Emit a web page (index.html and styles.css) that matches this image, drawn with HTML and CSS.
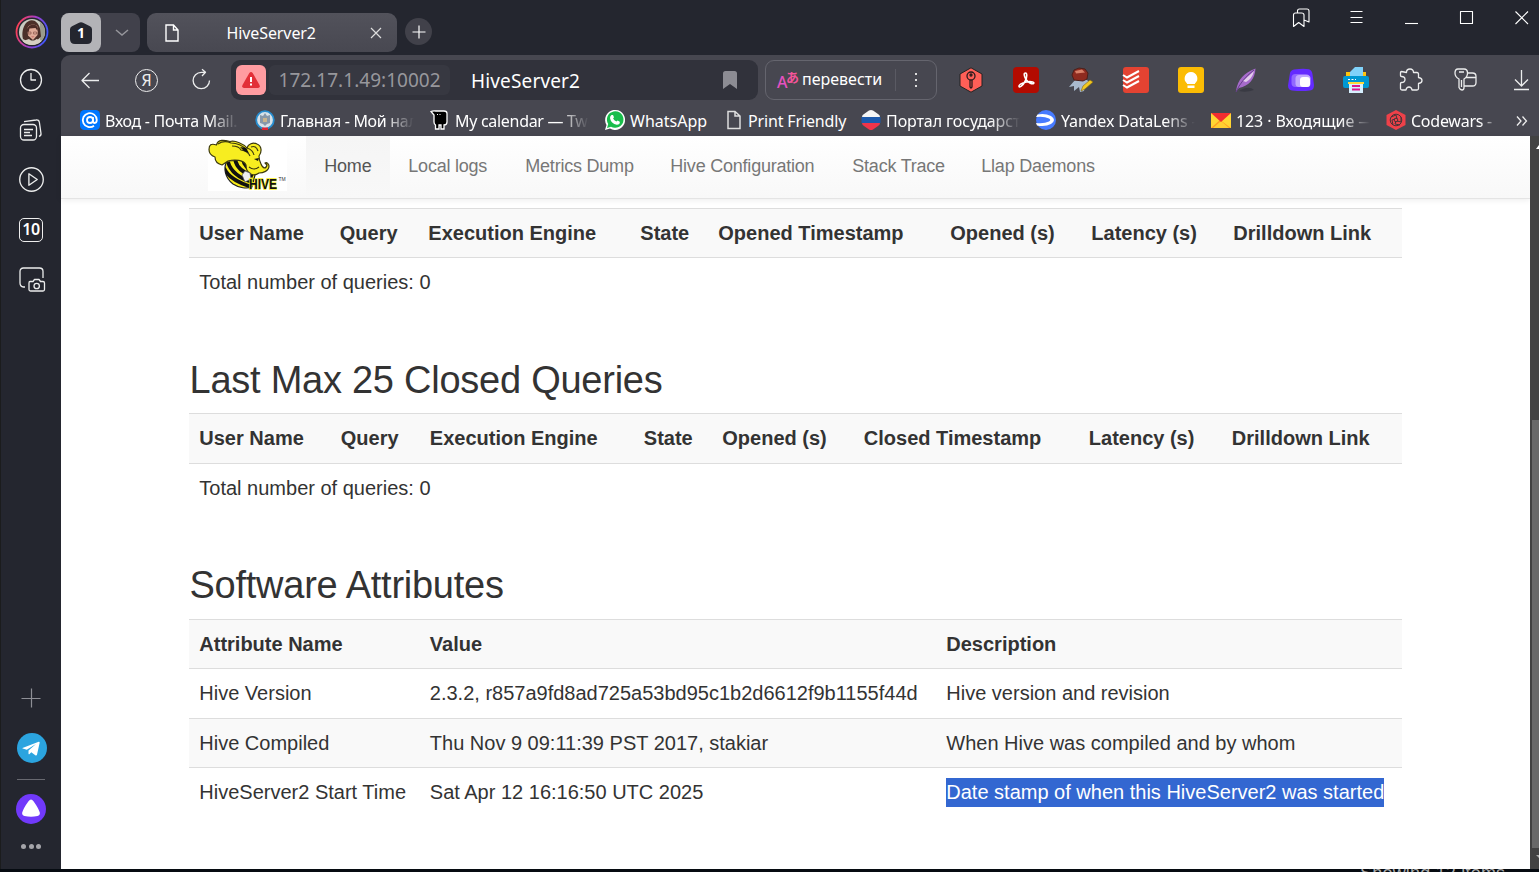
FILE: index.html
```html
<!DOCTYPE html>
<html lang="ru">
<head>
<meta charset="utf-8">
<title>HiveServer2</title>
<link rel="stylesheet" href="styles.css">
</head>
<body>
<div class="window">
<aside class="sidebar">
  <svg class="s-avatar" viewBox="0 0 34 34"><defs><linearGradient id="ring" x1="0" x2="1" y1=".3" y2=".6"><stop stop-color="#ff4050"/><stop offset=".5" stop-color="#a33cc8"/><stop offset="1" stop-color="#3c58ff"/></linearGradient><clipPath id="face"><circle cx="17" cy="17" r="13"/></clipPath></defs><circle cx="17" cy="17" r="15.5" fill="#24262f" stroke="url(#ring)" stroke-width="1.8"/><g clip-path="url(#face)"><path fill="#c9cbc0" d="M0 0h34v34H0z"/><path fill="#9a9b8d" d="M25 3h7v24h-7z"/><path fill="#4b3029" d="M8 24C6 18 9 8 13 6.500c5-3 10 0 12 7l1 8-4 4H11z"/><path fill="#dfab98" d="M12.500 13c1-4 9-5 10.500 0l-.5 7-4.500 5-5-4.500z"/><path fill="#4b2c27" d="M11.500 16c1-7 9-9 11.500-3l-.5 3-2-3-6 .5-1 4z"/><path fill="none" stroke="#8a574c" stroke-width=".7" d="M13 17h3v2h-3zM18.500 17h3v2h-3z"/><path fill="#c05e58" d="M16 21.500h3.500l-1.700 1z"/><path fill="#d6cfc2" d="m8 26 6-2 3.500 3 4-3 6 2v7H8z"/></g></svg>
  <svg class="s-clock line" viewBox="0 0 24 24"><circle cx="12" cy="12" r="10.5"/><path d="M12 5v7h5"/></svg>
  <svg class="s-news line" viewBox="0 0 24 24"><rect x="1.5" y="6.5" width="16" height="15.5" rx="3.5"/><path d="M5 3.700 17 2q3-.5 3.400 2.500l1.600 11q.3 2-2 3M5 11.500h9M5 14.500h6M5 17.500h8"/></svg>
  <svg class="s-play line" viewBox="0 0 24 24"><circle cx="12" cy="12" r="11.3"/><path d="M9.500 6.500v11l8-5.500z"/></svg>
  <div class="s-count">10</div>
  <svg class="s-shot line" viewBox="0 0 26 25"><path d="M6 20H4.500Q1 19.500 1 16V4.500Q1 1 4.500 1h16q3.500 0 3.500 3.500V11"/><path d="M11 14.500h3l1.500-2h4.500l1.500 2H24q1.500 0 1.500 1.500v6.500q0 1.500-1.500 1.500H11.500Q10 24 10 22.500V16q0-1.500 1-1.500z"/><circle cx="17.700" cy="19" r="2.700"/></svg>
  <svg class="s-plus" viewBox="0 0 20 20"><path d="M10.500 .5v19M.5 10.500h19" stroke="#8e8f96" fill="none" stroke-width="1.2"/></svg>
  <svg class="s-tg" viewBox="0 0 30 30"><circle cx="15" cy="15" r="15" fill="#2ba4df"/><path fill="#fff" d="m5.500 15 16.200-6.200q1.200-.2.900 1.300L20 21.700q-.5 1.200-1.700.5l-4-3-2 2q-.8.500-.8-.6v-3l7.500-6.700-9.200 5.800-4-1.200q-.8-.2-.3-.5z"/></svg>
  <div class="s-rule"></div>
  <svg class="s-alice" viewBox="0 0 30 30"><circle cx="15" cy="15" r="15" fill="#7139fb"/><path fill="#fff" d="M12.500 7.200Q15 3.600 17.500 7.200q5 7 6.300 11.400.5 2.600-2.300 3.500-6.500 1.500-13 0-2.800-.9-2.300-3.500Q7.500 14 12.500 7.200z"/></svg>
  <div class="s-dots"><i></i><i></i><i></i></div>
</aside>

<div class="browser">
  <header class="titlebar">
    <div class="group"><span class="group-count"><svg viewBox="0 0 22 22"><path fill="#24262f" d="M8.500 1Q11-.4 13.500 1L20 4.200q2 1 2 3V17q0 5-5 5H5q-5 0-5-5V7.200q0-2 2-3z"/></svg><b>1</b></span><svg class="chev" viewBox="0 0 14 8"><path d="m1 1 6 5 6-5" fill="none" stroke="#96969c" stroke-width="1.500"/></svg></div>
    <div class="tab"><svg class="tab-doc" viewBox="0 0 14 18"><path d="M1 1h7.500L13 6v11H1zM8.500 1v5H13" fill="none" stroke="#fff" stroke-width="1.400"/></svg><span>HiveServer2</span><svg class="tab-x" viewBox="0 0 12 12"><path d="m1 1 10 10M11 1 1 11" stroke="#ddd" stroke-width="1.200"/></svg></div>
    <div class="newtab"><svg viewBox="0 0 14 14"><path d="M7 .5v13M.5 7h13" stroke="#fff" stroke-width="1.200"/></svg></div>
    <div class="winctl">
      <svg viewBox="0 0 20 20"><path class="w" d="M1.500 18.500V7q0-2 2-2h6q2.500 0 2.500 2v11.500l-5.300-4zM5.500 5V3q0-2 2-2H15q2 0 2 2v11l-5-2"/></svg>
      <svg viewBox="0 0 20 20"><path class="w" d="M3.500 3.500h12M3.500 9.500h12M3.500 14.500h12"/></svg>
      <svg viewBox="0 0 20 20"><path class="w" d="M3 15.500h13"/></svg>
      <svg viewBox="0 0 20 20"><path class="w" d="M3.500 3.500h12v12h-12z"/></svg>
      <svg viewBox="0 0 20 20"><path class="w" d="m3.500 3.500 12.500 12.500M16 3.500 3.500 16"/></svg>
    </div>
  </header>

  <div class="toolbar">
    <div class="navs">
      <svg viewBox="0 0 24 24"><path class="w" d="M21 12.500H4m7.500-7.500L4 12.500l7.500 7.500"/></svg>
      <span class="ya">Я</span>
      <svg viewBox="0 0 24 24"><path class="w" d="M20.500 12.500a8.200 8.200 0 1 1-8.200-8.200h4.200M13 1.300 16.500 4.300 13 8"/></svg>
    </div>
    <div class="omnibox"><span class="warn"><svg viewBox="0 0 18 16"><path fill="#e22f38" d="M7.300 1q1.700-2 3.400 0L17.500 13q1 2.700-1.500 3H2Q-.5 15.700.5 13z"/><path stroke="#fff" stroke-width="2" d="M9 5v5M9 11.500v2"/></svg></span><span class="host">172.17.1.49:10002</span><span class="ptitle">HiveServer2</span><svg class="bm" viewBox="0 0 14 18"><path fill="#8c8c93" d="M2.500 0h9Q14 0 14 2.500V18l-7-5-7 5V2.500Q0 0 2.500 0z"/></svg></div>
    <div class="translate"><span class="tr-ico"><b>A</b><i>あ</i></span><span class="tr-text">перевести</span><span class="tr-more"><i></i><i></i><i></i></span></div>
    <div class="exts">
      <svg viewBox="0 0 26 26"><path fill="#ff5f57" stroke="#222" d="m13 .8 11 6.200v12l-11 6.200L2 19V7z"/><g fill="none" stroke="#2b1a1c" stroke-width="1.300"><circle cx="13" cy="9" r="4"/><circle cx="13" cy="8" r="1"/><path d="M12 13v7l1 1 1-1v-7"/></g></svg>
      <svg viewBox="0 0 26 26"><rect width="26" height="26" rx="4" fill="#b30b00"/><path fill="none" stroke="#fff" stroke-width="1.600" d="M12.500 6c-2 0-1.500 3 .5 6.500 2 3 6 5 7.500 4s-1.500-2.500-7-1.500-8 3.200-7.500 4.500 3.500-.5 6-5 2-8.500.5-8.500z"/></svg>
      <svg viewBox="0 0 26 26"><path fill="#a9bace" d="m7 13-6 7 5-1 0 5 5-4 1 5 4-1 1-6 5-3-5-3z"/><path fill="#8e2b1f" stroke="#4b201a" d="m6 3 5-2 6 1 3 4-1 6-4 2-9-1-2-5z"/><path fill="#d98068" d="m7 4 7-1.500 3 3-9 1z"/><path fill="#f3c81f" stroke="#836812" stroke-width=".6" d="m13 24 2-5 7-6 3 2-8 7z"/></svg>
      <svg viewBox="0 0 26 26"><rect width="26" height="26" rx="3" fill="#e44332"/><path fill="none" stroke="#fff" stroke-width="2" d="m0 8 4 2.500L16 4M0 13l4 2.500L16 9M0 18l4 2.500L16 14"/></svg>
      <svg viewBox="0 0 26 26"><rect width="26" height="26" rx="3" fill="#fbbc04"/><path fill="#fff" d="M13 5a6.500 6.500 0 0 1 4 11.500V17H9v-.5A6.500 6.500 0 0 1 13 5zM9.500 18.500h7V21h-7z"/></svg>
      <svg viewBox="0 0 26 26"><path fill="#393a43" d="M6 24q10-6 15-1-8 3-15 1z"/><path fill="#a66bcb" d="M3 24C5 12 11 6 22.500 1.500 22 12 16 19 6 21z"/><path fill="#e3cdec" d="M10 14 21 4q-2 8-8 11z"/><path fill="none" stroke="#68408c" d="M3 25Q8 13 21 3"/></svg>
      <svg viewBox="0 0 26 26"><path fill="#642bff" d="M6 2.500Q16 1 21 2.300q3 1 3.500 5L26 18q.2 5-4 5.500-8 1-18 0-4-.7-4-5L2 6q.7-3 4-3.500z"/><rect x="3.500" y="7" width="18" height="13" rx="4" fill="#9268ff"/><rect x="7.500" y="8" width="15" height="12" rx="3.500" fill="#c1a8ff"/><rect x="12" y="10" width="10" height="10" rx="3" fill="#fff"/></svg>
      <svg viewBox="0 0 26 26"><path fill="#ffc40c" d="M3 5h20v8H3z"/><path fill="#80d2fa" d="M7 10V5l5-5h8v10z"/><rect y="9" width="26" height="12" rx="2" fill="#0098d2"/><path fill="#ffd83a" d="M5 15h16v2H5z"/><path fill="#d7f0ff" d="M6 17h14v9H6z"/><path stroke="#dd168c" stroke-width="2" d="M9 19h8M9 22.500h8"/><path stroke="#fff" stroke-dasharray="2 1.500" d="M5 12.500h8"/></svg>
      <svg viewBox="0 0 26 26"><path class="w" d="M3.500 4.500q-1 0-1 1v3q0 1 1 1 3.500 0 3.500 3t-3.500 3q-1 0-1 1v5q0 1.500 1.500 1.500h4q.5-3 3-3t3 3h5q1.500 0 1.500-1.500v-5q3.500-.5 3.500-3t-3.500-3v-3.500q0-1.500-1.500-1.500h-3.500q0-3.500-3.500-3.500t-3.500 3.500z"/></svg>
      <svg viewBox="0 0 26 26"><path class="w" d="M5 2h6q3.500 0 3.500 4T11 12v8.500q0 2.500-2 2.500t-3-2.500V12q-4-2-4-6t3-4zM6 5h5M14.500 6h5q3.500 0 3.500 3.500v6q0 3.500-3.500 3.500H11M12.500 10.500H23M8.500 13v7"/></svg>
      <svg viewBox="0 0 26 26"><path class="w" d="M13.500 3v16M7 12.500l6.500 6.500 6.500-6.500M6 22.500h15"/></svg>
    </div>
  </div>

  <nav class="bookmarks">
    <a><svg viewBox="0 0 20 20"><rect width="20" height="20" rx="4.500" fill="#07f"/><g fill="none" stroke="#fff" stroke-width="1.800"><circle cx="10" cy="10" r="3"/><path d="M13 7v4q0 2 1.800 2t2-3A7 7 0 1 0 14 15.700"/></g></svg><span class="fade f1">Вход - Почта Mail.</span></a>
    <a><svg viewBox="0 0 20 20"><circle cx="10" cy="10" r="8.800" fill="#d7e2e9" stroke="#278dcf" stroke-width="1.800"/><path fill="#8798a9" d="m10 3 2 3 3-1v8l-3 1-2 2-2-2-3-1V5l3 1z"/><path fill="#c9b48d" d="M8 8h4v4H8z"/><path fill="#e02634" d="M7 17.500h6V20H7z"/></svg><span class="fade f2">Главная - Мой нал</span></a>
    <a><svg viewBox="0 0 20 20"><path fill="#000" stroke="#fff" stroke-width="1.300" d="M1 1.500q2-1 5-.5h8q3 0 3 2.500V12q0 3-3 3v4h-3v-4H9v4H5.500v-4Q4 14 4 12V5z"/><path fill="#fff" d="M7 4h1v1H7zM9.500 4h1v1h-1z"/></svg><span class="fade f3">My calendar — Twe</span></a>
    <a><svg viewBox="0 0 20 20"><path fill="#fff" d="M0 20 1.500 15A10 10 0 1 1 5 18.500z"/><path fill="#19bd4b" d="M2 18 3.200 14a8.300 8.300 0 1 1 2.800 2.700z"/><path fill="#fff" d="m6.500 5 1.500.1 1 2.200-.9 1.200q1 2.200 3.300 3l1.200-1 2.200 1.200q.4 3-3 3Q6 13.700 5 8q0-2 1.500-3z"/></svg><span>WhatsApp</span></a>
    <a><svg viewBox="0 0 20 20"><path d="M4 1.500h7L16 6v12.500H4zM11 1.500V6h5" fill="none" stroke="#ddd" stroke-width="1.500"/></svg><span class="f5">Print Friendly</span></a>
    <a><svg viewBox="0 0 20 20"><path fill="#f5f5f5" d="M1 7q0-2 2-3l5-3.500q2-1 4 0L17 4q2 1 2 3z"/><path fill="#1d5aac" d="M.5 7h19v6H.5z"/><path fill="#ef354a" d="M1 13h18q0 2-2 3l-5 3.500q-2 1-4 0L3 16q-2-1-2-3z"/></svg><span class="fade">Портал государст</span></a>
    <a><svg viewBox="0 0 20 20"><circle cx="10" cy="10" r="10" fill="#477bff"/><path fill="#fff" d="M1.500 4.500Q9 3 15 6q6 4 0 8-5.500 3-14 1.500L0 13q8 1 13-1.500 2.500-1.500 0-3Q8 6 0 7z"/></svg><span class="fade f7">Yandex DataLens -</span></a>
    <a><svg viewBox="0 0 20 20"><path fill="#ffd633" d="M0 3h20v15H0z"/><path fill="#ff9d22" d="m0 18 9-8 11 8z"/><path fill="#ffcf31" d="m2 18 8-7 8 7z"/><path fill="#f22d30" d="M0 3h20l-10 9z"/></svg><span class="fade">123 · Входящие —</span></a>
    <a><svg viewBox="0 0 20 20"><path fill="#ee4149" d="m10 0 9.500 5v10L10 20 .5 15V5z"/><g fill="none" stroke="#473438" stroke-width="1"><circle cx="10" cy="10" r="5.800"/><circle cx="10" cy="10" r="1.800"/><path d="m5 7 5-2 1 4M15 7v5l-4-1M7 15l-1-5 3-1M14 15l-5-1 1-3"/></g></svg><span class="fade f9">Codewars -</span></a>
    <svg class="more" viewBox="0 0 12 12"><path d="m1 1.500 4 4.500-4 4.500M6.500 1.500l4 4.500-4 4.500" fill="none" stroke="#eee" stroke-width="1.300"/></svg>
  </nav>

  <div class="viewport">
    <main class="page">
      <div class="navbar">
        <svg class="hive" viewBox="0 0 79 56"><path fill="#fff" d="M0 0h79v55H0z"/>
          <defs><clipPath id="bee"><path d="M19 25C15 32 17 42 25 48c6 4 14 5 19 3l3-12-9-15z"/></clipPath></defs>
          <path fill="#f7eb18" stroke="#222" stroke-width="1.200" d="M19 25C15 32 17 42 25 48c6 4 14 5 19 3l3-12-9-15z"/>
          <path clip-path="url(#bee)" fill="none" stroke="#111" stroke-width="3.800" d="M16 32q5 12 28 19M20 26q4 14 24 20M27 23q2 12 18 17M35 22q0 9 12 14"/>
          <path fill="#f7ed20" stroke="#3c390e" stroke-width="1.200" stroke-linejoin="round" d="M1 13.500C1 9 3 7 8.500 9 10 3 16 4 22 5.500 27 4 36 8 39 12c1-4 6-6 10-4 5 2 5 8 2 12 0 3 1 6 2 8 2 5 5 5 6 1l-2-2c2-1 4 1 4 3 0 5-6 7-10 7-3 2-7 3-9 0-3-1-4-5-4-8-2-5-11-6-18-4l-6 4c-4-1-7-4-7-8-3-1-6-3-6-7.500z"/>
          <path fill="none" stroke="#3c390e" stroke-width="1.200" d="M10 8q6-4 13-1 9 0 16 7M24 10q7 0 9 4 7 1 9 6M39 12q6 2 7 7M43 11q5-2 7 4M41 31q5 4 10 0"/>
          <path fill="#111" d="m32 11 6 1 3 5-5-2zM46 23l5-1-1 3z"/>
          <path fill="#eee" stroke="#555" stroke-width=".7" d="m34 39 3-4 5 2 1 6-6 3z"/>
          <text x="41" y="53" class="hive-text" textLength="28" lengthAdjust="spacingAndGlyphs">HIVE</text><text x="70.500" y="45" class="tm">TM</text></svg>
        <div class="menu"><a class="active">Home</a><a class="m2">Local logs</a><a class="m3">Metrics Dump</a><a class="m4">Hive Configuration</a><a class="m5">Stack Trace</a><a class="m6">Llap Daemons</a></div>
      </div>
      <section class="content">
        <div class="row head open"><b>User Name</b><b>Query</b><b>Execution Engine</b><b>State</b><b>Opened Timestamp</b><b>Opened (s)</b><b>Latency (s)</b><b>Drilldown Link</b></div>
        <div class="row"><span>Total number of queries: 0</span></div>
        <h2>Last Max 25 Closed Queries</h2>
        <div class="row head closed"><b>User Name</b><b>Query</b><b>Execution Engine</b><b>State</b><b>Opened (s)</b><b>Closed Timestamp</b><b>Latency (s)</b><b>Drilldown Link</b></div>
        <div class="row"><span>Total number of queries: 0</span></div>
        <h2>Software Attributes</h2>
        <div class="row head attrs"><b>Attribute Name</b><b>Value</b><b>Description</b></div>
        <div class="row attrs"><span>Hive Version</span><span>2.3.2, r857a9fd8ad725a53bd95c1b2d6612f9b1155f44d</span><span>Hive version and revision</span></div>
        <div class="row attrs odd"><span>Hive Compiled</span><span>Thu Nov 9 09:11:39 PST 2017, stakiar</span><span>When Hive was compiled and by whom</span></div>
        <div class="row attrs"><span>HiveServer2 Start Time</span><span>Sat Apr 12 16:16:50 UTC 2025</span><span><mark>Date stamp of when this HiveServer2 was started</mark></span></div>
      </section>
    </main>
    <div class="scrollbar"><i class="up"></i><div class="thumb"></div><i class="down"></i></div>
  </div>
</div>
</div>
<footer class="behind"><span>Showing 12 items</span></footer>
</body>
</html>
```

FILE: styles.css
```css
* { box-sizing: border-box; }
body { margin: 0; width: 1539px; height: 872px; overflow: hidden; background: #060b11; font-family: "Noto Sans", sans-serif; }
svg { display: block; flex: none; overflow: visible; }
.window { display: flex; height: 869px; background: #24262f; }
.line, .w { fill: none; stroke: #eceded; stroke-width: 1.3; stroke-linejoin: round; }

.sidebar { width: 61px; flex: none; border-left: 1px solid #1b1c1d; display: flex; flex-direction: column; align-items: center; }
.s-avatar { width: 34px; height: 34px; margin: 15px 0 0 1px; }
.s-clock { width: 24px; height: 24px; margin-top: 19px; }
.s-news { width: 24px; height: 24px; margin-top: 26px; }
.s-play { width: 25px; height: 25px; margin-top: 25px; }
.s-count { width: 24px; height: 24px; margin-top: 26px; border: 1.5px solid #eee; border-radius: 5px; color: #fff; font-weight: 600; font-size: 16px; letter-spacing: -0.3px; line-height: 21px; text-align: center; }
.s-shot { width: 26px; height: 25px; margin: 25px 0 0 2px; }
.s-plus { width: 20px; height: 20px; margin-top: 396px; }
.s-tg { width: 30px; height: 30px; margin: 25px 0 0 2px; }
.s-rule { width: 28px; height: 1px; background: #686970; margin-top: 16px; }
.s-alice { width: 30px; height: 30px; margin-top: 14px; }
.s-dots { display: flex; gap: 2.5px; margin-top: 20px; }
.s-dots i { width: 5px; height: 5px; border-radius: 50%; background: #a5a5aa; }

.browser { width: 1478px; display: flex; flex-direction: column; }
.titlebar { height: 55px; display: flex; align-items: flex-start; padding-top: 13px; }
.group { width: 79px; height: 39px; background: #41414b; border-radius: 8px; display: flex; align-items: center; }
.group-count { width: 40px; height: 39px; background: #b3b3b7; border-radius: 8px; display: grid; place-items: center; }
.group-count svg, .group-count b { grid-area: 1 / 1; }
.group-count svg { width: 22px; height: 22px; }
.group-count b { color: #fff; font-size: 14px; line-height: 20px; }
.chev { width: 14px; height: 8px; margin-left: 14px; }
.tab { width: 250px; height: 39px; margin-left: 7px; border-radius: 9px; background: linear-gradient(#52525b, #484851); color: #fff; font-size: 16px; letter-spacing: -0.1px; display: flex; align-items: center; padding: 0 15px 0 18px; }
.tab-doc { width: 14px; height: 18px; }
.tab span { width: 142px; padding-left: 47.5px; flex: 1; }
.tab-x { width: 12px; height: 12px; }
.newtab { width: 27px; height: 27px; margin: 5px 0 0 8px; border-radius: 50%; background: #41414a; display: grid; place-items: center; }
.newtab svg { width: 14px; height: 14px; }
.winctl { display: flex; gap: 35px; margin: -5px -3px 0 auto; padding-right: 10px; }
.winctl svg { width: 20px; height: 20px; }
.winctl .w { stroke: #fff; stroke-width: 1.1; }

.toolbar { height: 50px; flex: none; background: #474750; border-radius: 9px 0 0 0; display: flex; align-items: center; }
.navs { width: 170px; flex: none; padding-left: 17px; display: flex; gap: 32px; align-items: center; }
.navs svg { width: 24px; height: 24px; }
.ya { width: 23px; height: 23px; margin: 1px -1px 0 1px; border: 1.3px solid #eee; border-radius: 50%; color: #eee; font-size: 16px; line-height: 20px; text-align: center; }
.omnibox { width: 527px; height: 40px; flex: none; border-radius: 9px; background: #31323b; display: flex; align-items: center; padding-left: 5px; color: #fff; font-size: 19px; }
.warn { width: 30px; height: 30px; border-radius: 6px; background: #ff9ca1; display: grid; place-items: center; }
.warn svg { width: 18px; height: 16px; }
.host { width: 181px; height: 30px; line-height: 31px; margin-left: 3px; padding-left: 9.5px; border-radius: 6px; background: #373841; color: #97979c; letter-spacing: 0.03px; }
.ptitle { width: 252px; margin-left: 21px; padding-top: 1px; letter-spacing: 0.15px; }
.bm { width: 14px; height: 18px; }
.translate { width: 172px; height: 40px; flex: none; margin-left: 7px; border: 1.3px solid #65656e; border-radius: 9px; display: flex; align-items: center; color: #fff; padding-left: 11px; font-size: 16px; }
.tr-ico { width: 25px; height: 20px; display: flex; }
.tr-ico b { color: #e551c0; font: 500 16px/24px "Noto Sans", sans-serif; width: 9px; }
.tr-ico i { color: #f4549a; font: 700 13px/13px "Noto Sans CJK JP", sans-serif; }
.tr-text { width: 93px; line-height: 20px; margin-top: -3px; }
.tr-more { width: 40px; height: 22px; border-left: 1px solid #5a5a63; display: flex; flex-direction: column; align-items: center; justify-content: center; gap: 4px; }
.tr-more i { width: 2px; height: 2px; background: #ddd; }
.exts { display: flex; gap: 29px; margin-left: 21px; }
.exts svg { width: 26px; height: 26px; }

.bookmarks { height: 31px; background: #474750; display: grid; grid-template-columns: 175px 175px 175px 119px 137px 175px 175px 175px 130px 20px; align-items: center; padding-left: 19px; color: #fff; font-size: 16px; }
.bookmarks a { display: flex; align-items: center; gap: 5px; height: 31px; line-height: 30px; white-space: nowrap; }
.bookmarks a svg { width: 20px; height: 20px; margin-top: -1px; }
.fade { width: 134px; overflow: hidden; letter-spacing: -0.1px; -webkit-mask-image: linear-gradient(90deg, #000 78%, transparent); mask-image: linear-gradient(90deg, #000 78%, transparent); }
.f1, .f2, .f3 { letter-spacing: -0.3px; }
.f7 { letter-spacing: -0.15px; }
.f9 { width: 88px; letter-spacing: -0.25px; }
.f5 { letter-spacing: -0.15px; margin-left: -1px; }
.more { width: 12px; height: 12px; }

.viewport { height: 733px; display: flex; }
.page { width: 1469px; background: #fff; color: #333; font: 20px/28px "Liberation Sans", Arial, sans-serif; }
.navbar { height: 63px; border-bottom: 1px solid #e4e4e4; background: linear-gradient(#fff, #f8f8f8); box-shadow: 0 1px 6px rgba(0, 0, 0, .08); display: flex; padding-left: 147px; font-size: 18px; letter-spacing: -0.22px; color: #777; }
.hive { width: 79px; height: 56px; }
.hive-text { font: 900 14px "Liberation Sans", Arial, sans-serif; fill: #111; stroke: #f7ed20; stroke-width: 1.4px; paint-order: stroke; letter-spacing: 0; }
.tm { font: 5px "Liberation Sans", Arial, sans-serif; fill: #333; letter-spacing: 0; }
.menu { display: flex; height: 62px; line-height: 60px; margin-left: 19px; white-space: nowrap; }
.menu a { padding-left: 18.3px; }
.menu .active { width: 84px; color: #555; background: linear-gradient(#f5f5f5, #f8f8f8); }
.m2 { width: 117px; }
.m3 { width: 145px; }
.m4 { width: 182px; }
.m5 { width: 129px; }

.content { width: 1213px; margin: 8.6px 0 0 128px; }
.row { height: 49.5px; padding-top: 10px; border-top: 1px solid #ddd; display: grid; white-space: nowrap; }
.row > * { padding-left: 10.3px; }
.head, .odd { background: #f9f9f9; }
.open { grid-template-columns: 140.5px 88.5px 212px 78px 232px 141px 142px 1fr; }
.closed { grid-template-columns: 141.5px 89px 214px 78.5px 141.5px 225px 143px 1fr; }
.attrs { grid-template-columns: 230.5px 516.5px 1fr; }
h2 { height: 106.5px; margin: 0; padding: 50px 0 0 0.5px; font-size: 38px; line-height: 46px; font-weight: 400; letter-spacing: -0.25px; }
mark { display: inline-block; height: 29px; background: #3367d1; color: #fff; }

.scrollbar { width: 9px; background: #424242; display: flex; flex-direction: column; align-items: flex-end; overflow: hidden; }
.thumb { width: 7px; height: 428px; background: #696969; margin-top: 271px; }
.up, .down { width: 3px; flex: none; }
.up { height: 4px; margin-top: 9px; background: #fff; clip-path: polygon(100% 0, 100% 100%, 0 100%); }
.down { height: 3px; margin-top: 7px; background: #aaa; clip-path: polygon(0 0, 100% 0, 100% 100%); }
.behind { height: 3px; overflow: hidden; padding-left: 1360px; color: #aaa; font: 18px/9px "Liberation Sans", Arial, sans-serif; letter-spacing: .2px; white-space: nowrap; }
```
